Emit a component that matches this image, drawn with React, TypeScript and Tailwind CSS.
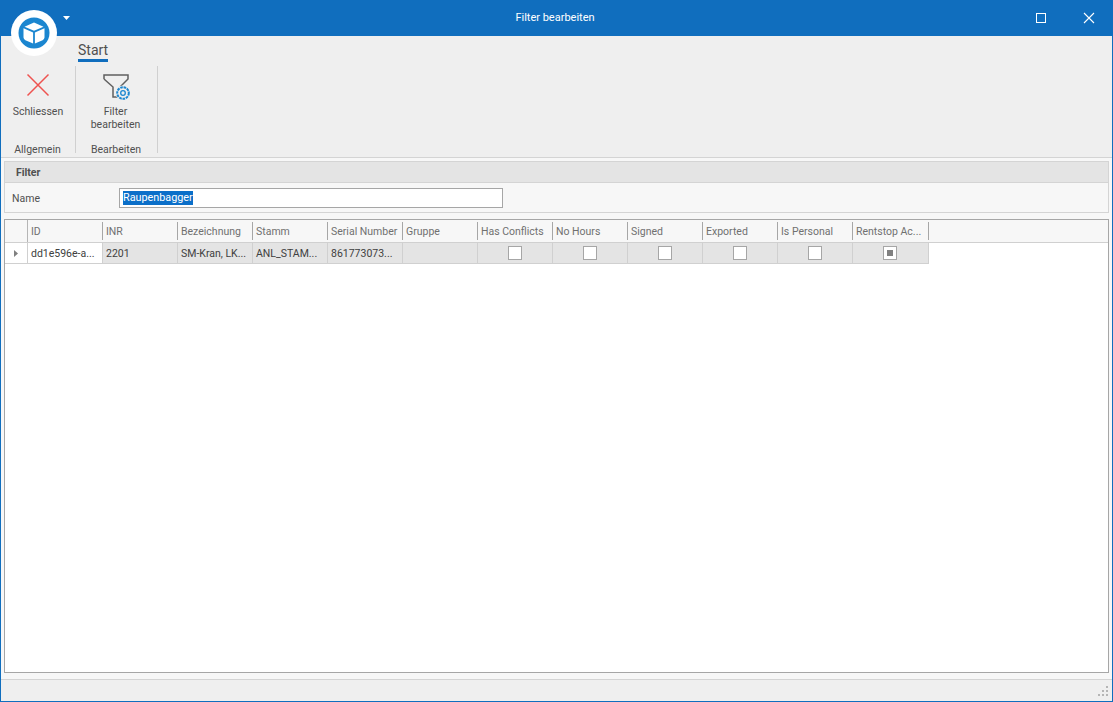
const columns = ["ID", "INR", "Bezeichnung", "Stamm", "Serial Number", "Gruppe", "Has Conflicts", "No Hours", "Signed", "Exported", "Is Personal", "Rentstop Ac..."];
const textCells = ["dd1e596e-a...", "2201", "SM-Kran, LK...", "ANL_STAM...", "861773073...", ""];

function Check({ checked = false }: { checked?: boolean }) {
  return (
    <div className="w-[14px] h-[14px] border border-[#a6a6a6] bg-white flex items-center justify-center">
      {checked && <div className="w-[6px] h-[6px] bg-[#808080]" />}
    </div>
  );
}

function Group({ label, width, children }: { label: string; width: string; children: React.ReactNode }) {
  return (
    <div className={`${width} h-[87px] flex flex-col items-center border-r border-[#d0d0d0]`}>
      <div className="flex-1 flex flex-col items-center">{children}</div>
      <div className="h-[14px] leading-[14px] text-[#505050] mb-[-4px] pr-[1px]">{label}</div>
    </div>
  );
}

export default function App() {
  return (
    <div className="relative w-[1113px] h-[702px] overflow-hidden bg-[#f7f7f7] border border-t-0 border-[#106ebe] flex flex-col text-[10.5px] text-[#505050] font-['Roboto','Liberation_Sans',sans-serif]">
      <header className="h-[36px] -mx-px shrink-0 bg-[#106ebe] flex items-center text-white text-[11px]">
        <div className="flex-1 text-center pr-[3px] pt-[1px]">Filter bearbeiten</div>
        <div className="absolute right-[66px] top-[13px] w-[10px] h-[10px] border border-white" />
        <svg className="absolute right-[17px] top-[12px]" width="12" height="12" viewBox="0 0 12 12" fill="none" stroke="#fff" strokeWidth="1.1">
          <path d="M1 1l10 10M11 1L1 11" />
        </svg>
      </header>

      <div className="absolute left-[10px] top-[10px] w-[46px] h-[46px] rounded-full bg-white flex items-center justify-center">
        <svg width="32" height="32" viewBox="0 0 32 32">
          <circle cx="16" cy="16" r="15.500" fill="#1b86d0" />
          <path d="M16 5.500l9.500 4.200L16 13.800 6.500 9.700z" fill="#fff" />
          <path d="M5.500 11.300l9.600 4.100v11L7.400 23.200a3 3 0 0 1-1.900-2.600z" fill="#fff" />
          <path d="M26.500 11.300l-9.600 4.100v11l7.700-3.200a3 3 0 0 0 1.900-2.600z" fill="#fff" />
        </svg>
      </div>
      <svg className="absolute left-[62px] top-[16px]" width="7" height="4" viewBox="0 0 7 4">
        <path d="M0 0h7L3.500 4z" fill="#fff" />
      </svg>

      <section className="h-[122px] shrink-0 bg-[#efefef] border-b border-[#d4d4d4] flex flex-col">
        <div className="h-[30px] pl-[77px] pt-[6px]">
          <div className="w-[30px] text-[14px] leading-[17px] text-[#505050] border-b-[3px] border-[#106ebe] text-center h-[20px] whitespace-nowrap">Start</div>
        </div>
        <div className="flex">
          <Group label="Allgemein" width="w-[75px]">
            <svg className="mt-[7px] mb-[8px]" width="24" height="24" viewBox="0 0 24 24" fill="none" stroke="#ef5350" strokeWidth="1.500">
              <path d="M1.500 1.500l21 21M22.500 1.500l-21 21" />
            </svg>
            <div className="leading-[13px]">Schliessen</div>
          </Group>
          <Group label="Bearbeiten" width="w-[82px]">
            <svg className="mt-[7px] mb-[4px] ml-[1px]" width="28" height="28" viewBox="0 0 28 28" fill="none">
              <path d="M1 6V2h24v4l-8 8M1 6l9 8v10h5" stroke="#606060" strokeWidth="1.500" />
              <circle cx="20" cy="20" r="7.500" fill="#efefef" />
              <circle cx="20" cy="20" r="5.800" fill="#efefef" stroke="#1b86d0" strokeWidth="2" strokeDasharray="2.600 .8" />
              <circle cx="20" cy="20" r="2.300" fill="#efefef" stroke="#1b86d0" strokeWidth="1.300" />
            </svg>
            <div className="leading-[13px] text-center pr-[2px]">Filter<br />bearbeiten</div>
          </Group>
        </div>
      </section>

      <main className="flex-1 min-h-0 flex flex-col pl-[3px] pr-[3px] pt-[3px]">
        <section className="h-[52px] shrink-0 border border-[#d4d4d4] flex flex-col">
          <div className="h-[21px] bg-[#e4e4e4] border-b border-[#d4d4d4] pl-[11px] leading-[21px] font-bold text-[#505050]">Filter</div>
          <div className="flex-1 flex items-center pl-[7px]">
            <div className="w-[107px] pt-[2px]">Name</div>
            <div className="w-[384px] h-[20px] border border-[#a6a6a6] bg-white pl-[3px] flex items-center">
              <span className="bg-[#0b6fc9] text-white leading-[14px] text-[10.8px]">Raupenbagger</span>
            </div>
          </div>
        </section>

        <section className="mt-[6px] h-[454px] shrink-0 border border-[#a6a6a6] bg-white">
          <div className="flex h-[23px] bg-[#f7f7f7] border-b border-[#d0d0d0] text-[#707070]">
            <div className="w-[23px] h-[22px] shrink-0 border-r border-[#b5b5b5]" />
            {columns.map((c, i) => (
              <div key={c} className={`${i === 11 ? "w-[76px]" : "w-[75px]"} shrink-0 pl-[3px] leading-[23px] relative whitespace-nowrap overflow-hidden`}>
                {c}
                <div className="absolute right-0 top-[2px] h-[18px] w-px bg-[#a6a6a6]" />
              </div>
            ))}
          </div>
          <div className="flex h-[21px] w-[924px] bg-[#e4e4e4] border-b border-[#d0d0d0] text-[#404040]">
            <div className="w-[23px] shrink-0 bg-white border-r border-[#d0d0d0] flex items-center justify-center">
              <svg width="4" height="7" viewBox="0 0 4 7"><path d="M0 0l4 3.500L0 7z" fill="#808080" /></svg>
            </div>
            {textCells.map((c, i) => (
              <div key={i} className={`w-[75px] shrink-0 pl-[3px] leading-[21px] border-r border-[#d0d0d0] whitespace-nowrap overflow-hidden ${i === 0 ? "bg-white" : ""}`}>{c}</div>
            ))}
            {[false, false, false, false, false, true].map((v, i) => (
              <div key={i} className={`${i === 5 ? "w-[76px] pr-[1px]" : "w-[75px]"} shrink-0 border-r border-[#d0d0d0] flex items-center justify-center`}>
                <Check checked={v} />
              </div>
            ))}
          </div>
        </section>
      </main>

      <footer className="h-[22px] shrink-0 bg-[#efefef] border-t border-[#d4d4d4] flex items-end justify-end pr-[3px] pb-[3px]">
        <svg width="12" height="12" viewBox="0 0 12 12" fill="#b5b5b5">
          <rect x="9" y="0" width="2" height="2" />
          <rect x="5" y="4" width="2" height="2" />
          <rect x="9" y="4" width="2" height="2" />
          <rect x="1" y="8" width="2" height="2" />
          <rect x="5" y="8" width="2" height="2" />
          <rect x="9" y="8" width="2" height="2" />
        </svg>
      </footer>
    </div>
  );
}
